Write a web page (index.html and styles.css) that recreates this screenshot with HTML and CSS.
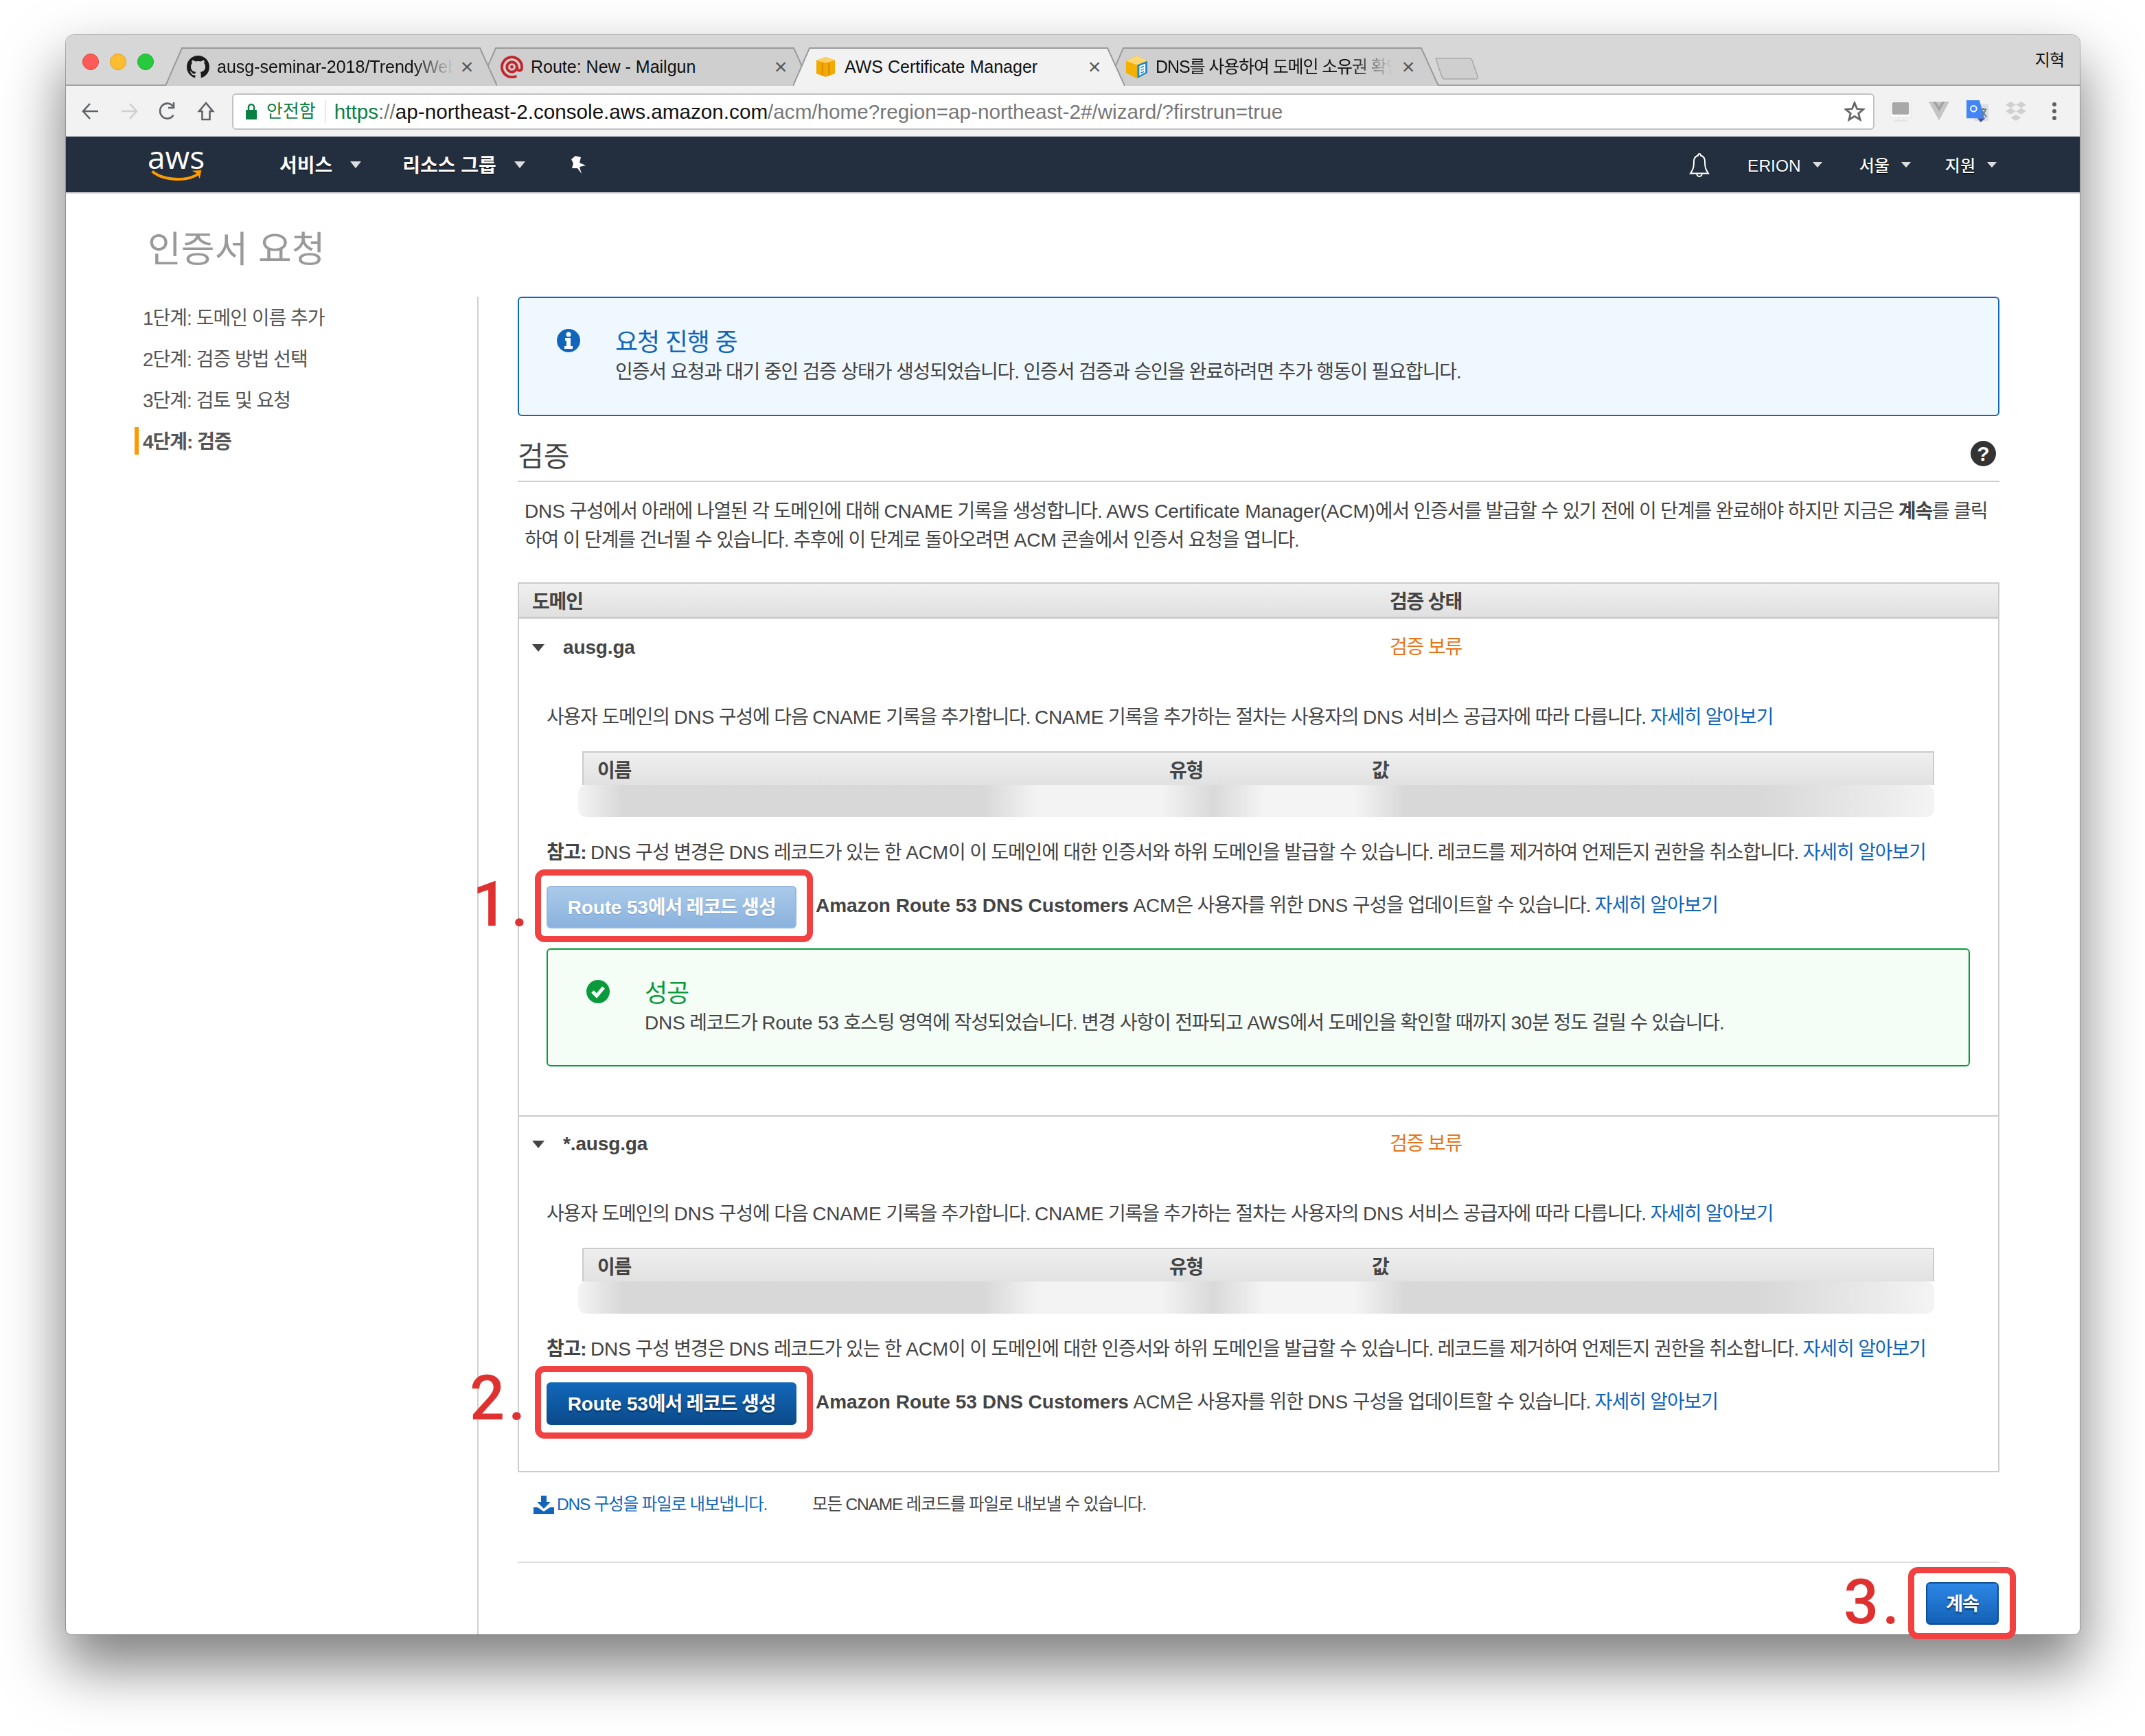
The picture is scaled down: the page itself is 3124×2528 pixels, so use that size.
FILE: index.html
```html
<!DOCTYPE html>
<html lang="ko">
<head>
<meta charset="utf-8">
<title>AWS Certificate Manager</title>
<link rel="stylesheet" href="styles.css">
</head>
<body>
<div class="window">
  <header class="tabstrip">
    <div class="lights"><i class="light red"></i><i class="light yellow"></i><i class="light green"></i></div>
    <div class="tabs">
      <div class="tab t1">
        <svg class="tabshape" viewBox="0 0 483 56"><path d="M0 56 L24 1 H458 L483 56" /></svg>
        <svg class="fav" viewBox="0 0 16 16"><path fill="#1b1b1b" d="M8 0C3.58 0 0 3.58 0 8c0 3.54 2.29 6.53 5.47 7.59.4.07.55-.17.55-.38 0-.19-.01-.82-.01-1.49-2.01.37-2.53-.49-2.69-.94-.09-.23-.48-.94-.82-1.13-.28-.15-.68-.52-.01-.53.63-.01 1.08.58 1.23.82.72 1.21 1.87.87 2.33.66.07-.52.28-.87.51-1.07-1.78-.2-3.64-.89-3.64-3.95 0-.87.31-1.59.82-2.15-.08-.2-.36-1.02.08-2.12 0 0 .67-.21 2.2.82.64-.18 1.32-.27 2-.27.68 0 1.36.09 2 .27 1.53-1.04 2.2-.82 2.2-.82.44 1.1.16 1.92.08 2.12.51.56.82 1.27.82 2.15 0 3.07-1.87 3.75-3.65 3.95.29.25.54.73.54 1.48 0 1.07-.01 1.93-.01 2.2 0 .21.15.46.55.38A8.013 8.013 0 0016 8c0-4.42-3.58-8-8-8z"/></svg>
        <span class="tabtitle fade">ausg-seminar-2018/TrendyWeb</span>
        <span class="tabx">×</span>
      </div>
      <div class="tab t2">
        <svg class="tabshape" viewBox="0 0 483 56"><path d="M0 56 L24 1 H458 L483 56" /></svg>
        <svg class="fav" viewBox="0 0 34 34"><g fill="none" stroke="#c5242b"><path stroke-width="4" d="M24 30.5A15 15 0 1 1 32 17c0 4-1.500 5.500-3.500 5.500S25 21 25 17"/><circle cx="17" cy="17" r="7.500" stroke-width="4"/></g><circle cx="17" cy="17" r="2.500" fill="#c5242b"/></svg>
        <span class="tabtitle">Route: New - Mailgun</span>
        <span class="tabx">×</span>
      </div>
      <div class="tab t3 active">
        <svg class="tabshape" viewBox="0 0 483 56"><path d="M0 56 L24 1 H458 L483 56" /></svg>
        <svg class="fav" viewBox="0 0 34 34"><path fill="#f2a900" d="M3 7 L17 2 L31 7 V27 L17 32 L3 27Z"/><path fill="#ffcf66" d="M3 7 L17 2 L31 7 L17 11Z"/><path fill="#d68a00" d="M11 11h2v19h-2zM21 11h2v19h-2z"/></svg>
        <span class="tabtitle">AWS Certificate Manager</span>
        <span class="tabx">×</span>
      </div>
      <div class="tab t4">
        <svg class="tabshape" viewBox="0 0 483 56"><path d="M0 56 L24 1 H458 L483 56" /></svg>
        <svg class="fav" viewBox="0 0 34 34"><path fill="#f4b000" d="M1 8 L17 0 L33 8 V26 L17 34 L1 26Z"/><path fill="#ffd873" d="M1 8 L17 0 L33 8 L17 14Z"/><path fill="#1e88c9" d="M18 14 L33 8 V26 L18 34Z"/><path fill="#fff" d="M21 15.500 L30 12 V25 L21 30Z"/><path stroke="#1e88c9" stroke-width="1.500" d="M23 18 l5-2 M23 22 l5-2 M23 26 l5-2"/></svg>
        <span class="tabtitle fade hangul">DNS를 사용하여 도메인 소유권 확인</span>
        <span class="tabx">×</span>
      </div>
      <svg class="newtab" viewBox="0 0 64 32"><path d="M1 1 H50 Q53 1 54 4 L62 27 Q63 31 60 31 H14 Q11 31 10 28Z"/></svg>
    </div>
    <span class="username">지혁</span>
  </header>

  <div class="toolbar">
    <div class="navcell"><svg class="tool" viewBox="0 0 28 28"><path d="M25 14H4M13 3 3 14l10 11" stroke="#5f6368"/></svg></div>
    <div class="navcell"><svg class="tool" viewBox="0 0 28 28"><path d="M3 14h21M15 3l10 11-10 11" stroke="#cfcfcf"/></svg></div>
    <div class="navcell"><svg class="tool" viewBox="0 0 28 28"><path d="M22.500 19.500A10.500 11 0 1 1 22 7M23 1v8h-8" stroke="#5f6368"/></svg></div>
    <div class="navcell"><svg class="tool" viewBox="0 0 28 28"><path d="M14 2 4 14h4.500v12h11V14H24Z" stroke="#5f6368"/></svg></div>
    <div class="omnibox">
      <svg class="lock" viewBox="0 0 16 24"><path fill="#0b8043" d="M1 10h14a1 1 0 0 1 1 1v12a1 1 0 0 1-1 1H1a1 1 0 0 1-1-1V11a1 1 0 0 1 1-1z"/><path fill="none" stroke="#0b8043" stroke-width="2.500" d="M4 10V6a4 4 0 0 1 8 0v4"/></svg>
      <span class="secure">안전함</span>
      <span class="omnisep"></span>
      <span class="url"><span class="green">https</span><span class="gray">://</span>ap-northeast-2.console.aws.amazon.com<span class="gray">/acm/home?region=ap-northeast-2#/wizard/?firstrun=true</span></span>
      <svg class="star" viewBox="0 0 32 32"><path fill="none" stroke="#666" stroke-width="3" d="M16 3l3.800 9.300 10 .7-7.700 6.400 2.500 9.700L16 23.800l-8.600 5.300 2.500-9.700L2.200 13l10-.7z"/></svg>
    </div>
    <div class="exts">
      <div class="extcell"><svg class="ext" viewBox="0 0 34 34"><rect x="1" y="0" width="32" height="27" rx="3" fill="#fafafa" stroke="#e4e4e4"/><rect x="4" y="3" width="26" height="19" rx="2" fill="#a8a8a8"/><path fill="#f6f6f6" stroke="#ddd" d="M13 27h8v4h-8zM7 31h20v2.500H7z"/></svg></div>
      <div class="extcell"><svg class="ext" viewBox="0 0 34 30"><path fill="#c4c4c4" d="M1 0h32L17 29Z"/><path fill="#a0a0a0" d="M8 0h18l-9 15Z"/><path fill="#c4c4c4" d="M12 0h10l-5 8Z"/></svg></div>
      <div class="extcell"><svg class="ext" viewBox="0 0 34 34"><rect x="12" y="6" width="22" height="26" fill="#dedede"/><path fill="#4285f4" d="M0 0h20l8 28H0Z"/><path fill="#3f51b5" d="M17 28h12l-7 6Z"/><circle cx="11" cy="13" r="4.500" fill="none" stroke="#fff" stroke-width="2"/><path stroke="#607d8b" stroke-width="2" fill="none" d="M22 14h9M26 12v3M30 15l-7 11M24 16l7 10"/></svg></div>
      <div class="extcell"><svg class="ext" viewBox="0 0 34 30"><path fill="#d0d0d0" d="M9 0l8 5-8 5-8-5zM25 0l8 5-8 5-8-5zM9 10l8 5-8 5-8-5zM25 10l8 5-8 5-8-5zM17 20l8 5-8 5-8-5z"/></svg></div>
      <div class="extcell"><svg class="ext dots" viewBox="0 0 6 26"><circle cx="3" cy="3" r="3"/><circle cx="3" cy="13" r="3"/><circle cx="3" cy="23" r="3"/></svg></div>
    </div>
  </div>

  <nav class="awsnav">
    <div class="awslogo">
      <span class="awsword">aws</span>
      <svg class="smile" viewBox="0 0 84 22"><path fill="none" stroke="#f90" stroke-width="4.500" d="M2 5C20 20 58 22 76 9"/><path fill="#f90" d="M66 4l15-1-3 14-3-8z"/></svg>
    </div>
    <span class="navitem services">서비스</span><i class="caret big"></i>
    <span class="navitem groups">리소스 그룹</span><i class="caret big"></i>
    <svg class="pin" viewBox="0 0 26 26"><path fill="#fff" d="M9 0 17 2 15 10 24 14 15 16 18 26 12 18 4 18 6 11 3 5Z"/></svg>
    <svg class="bell" viewBox="0 0 32 36"><path fill="none" stroke="#fff" stroke-width="2" d="M16 2c1 0 2 1 2 2.500 4 1 6 5 6 9 0 8 1 11 5 17H3c4-6 5-9 5-17 0-4 2-8 6-9C14 3 15 2 16 2zM12 30c0 3 2 5 4 5s4-2 4-5"/></svg>
    <span class="navitem small erion">ERION</span><i class="caret"></i>
    <span class="navitem small seoul">서울</span><i class="caret"></i>
    <span class="navitem small support">지원</span><i class="caret"></i>
  </nav>

  <div class="page">
    <h1 class="pagetitle">인증서 요청</h1>
    <div class="columns">
      <aside class="sidenav">
        <ul class="steps">
          <li class="step">1단계: 도메인 이름 추가</li>
          <li class="step">2단계: 검증 방법 선택</li>
          <li class="step">3단계: 검토 및 요청</li>
          <li class="step current">4단계: 검증</li>
        </ul>
      </aside>
      <main class="main">
        <section class="alert info">
          <svg class="alerticon" viewBox="0 0 34 34"><circle cx="17" cy="17" r="17" fill="#1166bb"/><circle cx="17" cy="8" r="3.500" fill="#fff"/><path fill="#fff" d="M12 13h8v12h3v4H11v-4h3v-8h-2z"/></svg>
          <div class="alertbody">
            <h2 class="alerttitle">요청 진행 중</h2>
            <p class="alerttext">인증서 요청과 대기 중인 검증 상태가 생성되었습니다. 인증서 검증과 승인을 완료하려면 추가 행동이 필요합니다.</p>
          </div>
        </section>

        <div class="sectionhead">
          <h2 class="sectiontitle">검증</h2>
          <span class="help">?</span>
        </div>
        <p class="intro"><span class="en">DNS</span> 구성에서 아래에 나열된 각 도메인에 대해 <span class="en">CNAME</span> 기록을 생성합니다. <span class="en">AWS Certificate Manager(ACM)</span>에서 인증서를 발급할 수 있기 전에 이 단계를 완료해야 하지만 지금은 <b>계속</b>를 클릭하여 이 단계를 건너뛸 수 있습니다. 추후에 이 단계로 돌아오려면 <span class="en">ACM</span> 콘솔에서 인증서 요청을 엽니다.</p>

        <div class="domains">
          <div class="domainshead"><span class="domcol">도메인</span><span>검증 상태</span></div>

          <div class="domain first">
            <div class="domainrow"><span class="domcol domname"><i class="tri"></i><span class="en">ausg.ga</span></span><span class="pending">검증 보류</span></div>
            <p class="line">사용자 도메인의 <span class="en">DNS</span> 구성에 다음 <span class="en">CNAME</span> 기록을 추가합니다. <span class="en">CNAME</span> 기록을 추가하는 절차는 사용자의 <span class="en">DNS</span> 서비스 공급자에 따라 다릅니다. <a class="link">자세히 알아보기</a></p>
            <div class="records">
              <div class="recordshead"><span class="c1">이름</span><span class="c2">유형</span><span>값</span></div>
              <div class="band"></div>
            </div>
            <p class="line note"><b>참고:</b> <span class="en">DNS</span> 구성 변경은 <span class="en">DNS</span> 레코드가 있는 한 <span class="en">ACM</span>이 이 도메인에 대한 인증서와 하위 도메인을 발급할 수 있습니다. 레코드를 제거하여 언제든지 권한을 취소합니다. <a class="link">자세히 알아보기</a></p>
            <div class="action">
              <span class="redbox"></span><span class="marker m1">1.</span>
              <button class="btn disabled"><span class="en">Route 53</span>에서 레코드 생성</button>
              <span class="actiontext"><b class="en">Amazon Route 53 DNS Customers</b> <span class="en">ACM</span>은 사용자를 위한 <span class="en">DNS</span> 구성을 업데이트할 수 있습니다. <a class="link">자세히 알아보기</a></span>
            </div>
            <section class="alert success">
              <svg class="alerticon" viewBox="0 0 34 34"><circle cx="17" cy="17" r="17" fill="#0a9a3c"/><path fill="none" stroke="#fff" stroke-width="5" d="M9 17l6 6 10-12"/></svg>
              <div class="alertbody">
                <h2 class="alerttitle">성공</h2>
                <p class="alerttext"><span class="en">DNS</span> 레코드가 <span class="en">Route 53</span> 호스팅 영역에 작성되었습니다. 변경 사항이 전파되고 <span class="en">AWS</span>에서 도메인을 확인할 때까지 <span class="en">30</span>분 정도 걸릴 수 있습니다.</p>
              </div>
            </section>
          </div>

          <div class="domain second">
            <div class="domainrow"><span class="domcol domname"><i class="tri"></i><span class="en">*.ausg.ga</span></span><span class="pending">검증 보류</span></div>
            <p class="line">사용자 도메인의 <span class="en">DNS</span> 구성에 다음 <span class="en">CNAME</span> 기록을 추가합니다. <span class="en">CNAME</span> 기록을 추가하는 절차는 사용자의 <span class="en">DNS</span> 서비스 공급자에 따라 다릅니다. <a class="link">자세히 알아보기</a></p>
            <div class="records">
              <div class="recordshead"><span class="c1">이름</span><span class="c2">유형</span><span>값</span></div>
              <div class="band"></div>
            </div>
            <p class="line note"><b>참고:</b> <span class="en">DNS</span> 구성 변경은 <span class="en">DNS</span> 레코드가 있는 한 <span class="en">ACM</span>이 이 도메인에 대한 인증서와 하위 도메인을 발급할 수 있습니다. 레코드를 제거하여 언제든지 권한을 취소합니다. <a class="link">자세히 알아보기</a></p>
            <div class="action">
              <span class="redbox"></span><span class="marker m2">2.</span>
              <button class="btn primary"><span class="en">Route 53</span>에서 레코드 생성</button>
              <span class="actiontext"><b class="en">Amazon Route 53 DNS Customers</b> <span class="en">ACM</span>은 사용자를 위한 <span class="en">DNS</span> 구성을 업데이트할 수 있습니다. <a class="link">자세히 알아보기</a></span>
            </div>
          </div>
        </div>

        <div class="export">
          <svg class="dl" viewBox="0 0 30 27"><path fill="#1166bb" d="M11 0h8v9h6L15 19 5 9h6z"/><path fill="#1166bb" d="M0 17h6l9 6 9-6h6v10H0z"/></svg>
          <a class="link exportlink">DNS 구성을 파일로 내보냅니다.</a>
          <span class="exporttext">모든 CNAME 레코드를 파일로 내보낼 수 있습니다.</span>
        </div>

        <div class="footer">
          <div class="continuewrap">
            <span class="redbox"></span><span class="marker m3">3.</span>
            <button class="btn continue">계속</button>
          </div>
        </div>
      </main>
    </div>
  </div>
</div>
</body>
</html>
```

FILE: styles.css
```css
* { box-sizing: border-box; }
html, body { margin: 0; padding: 0; background: #fff; }
body {
  width: 3124px;
  height: 2528px;
  overflow: hidden;
  padding: 51px 0 0 96px;
  font-family: "Liberation Sans", "Noto Sans CJK KR", sans-serif;
  font-size: 28px;
  line-height: 42px;
  letter-spacing: -1.15px;
  color: #444;
}
h1, h2, p, ul { margin: 0; padding: 0; font-weight: normal; }
b { font-weight: 700; }
.link { color: #1166bb; }
.en { letter-spacing: -0.15px; }
b.en { letter-spacing: 0; }

.window {
  width: 2933px;
  height: 2329px;
  border-radius: 12px 12px 8px 8px;
  background: #fff;
  box-shadow: 0 0 0 1px rgba(90, 90, 90, .45), 0 44px 84px 4px rgba(0, 0, 0, .5);
}

/* browser chrome */
.tabstrip {
  height: 74px;
  display: flex;
  align-items: flex-end;
  background: #d7d7d7;
  border-radius: 12px 12px 0 0;
  border-bottom: 2px solid #a2a2a2;
  letter-spacing: 0;
}
.lights {
  width: 145px;
  height: 72px;
  flex: none;
  display: flex;
  gap: 16px;
  padding: 27px 0 0 24px;
}
.light { width: 24px; height: 24px; border-radius: 50%; }
.light.red { background: #fc5b57; border: 1px solid #e0443e; }
.light.yellow { background: #fdbd2e; border: 1px solid #dea123; }
.light.green { background: #27c93f; border: 1px solid #1dad2b; }

.tabs { display: flex; align-items: flex-end; flex: none; margin-bottom: -2px; }
.tab {
  position: relative;
  width: 483px;
  height: 56px;
  flex: none;
  margin-right: -26px;
  display: flex;
  align-items: center;
  padding: 0 0 0 31px;
  font-size: 25px;
  color: #111;
}
.tabshape { position: absolute; inset: 0; width: 483px; height: 56px; }
.tabshape path { fill: #cfcfcf; stroke: #9a9a9a; stroke-width: 2; }
.t1 { z-index: 4; }
.t2 { z-index: 3; }
.t3 { z-index: 5; }
.t4 { z-index: 2; }
.active .tabshape path { fill: #f2f2f2; }
.fav { position: relative; width: 33px; height: 33px; flex: none; margin-right: 11px; }
.t4 .fav { margin-left: -4px; }
.tabtitle { position: relative; width: 354px; flex: none; white-space: nowrap; overflow: hidden; line-height: 32px; }
.t4 .tabtitle { width: 358px; }
.hangul { letter-spacing: -1.1px; }
.fade { -webkit-mask-image: linear-gradient(to right, #000 285px, transparent 345px); mask-image: linear-gradient(to right, #000 285px, transparent 345px); }
.tabx { position: relative; width: 24px; text-align: center; color: #555; font-size: 32px; line-height: 32px; margin-left: -2px; }
.newtab { width: 64px; height: 32px; flex: none; margin: 0 0 9px 21px; position: relative; z-index: 1; }
.newtab path { fill: #cfcfcf; stroke: #a8a8a8; stroke-width: 1.5; }
.username { margin-left: auto; align-self: center; padding: 2px 23px 0 0; font-size: 24px; line-height: 32px; color: #111; letter-spacing: -1px; }

.toolbar {
  height: 74px;
  display: flex;
  align-items: center;
  padding: 1px 9px 0 8px;
  background: #f2f2f2;
  border-bottom: 1px solid #c9c9c9;
  letter-spacing: 0;
}
.navcell { width: 56px; display: flex; justify-content: center; flex: none; }
.tool { width: 28px; height: 28px; }
.tool path { fill: none; stroke-width: 2.6; }
.omnibox {
  flex: 1;
  height: 53px;
  margin-left: 10px;
  display: flex;
  align-items: center;
  padding: 0 12px 0 18px;
  background: #fff;
  border: 2px solid #c2c2c2;
  border-radius: 6px;
  font-size: 29.67px;
  color: #111;
}
.lock { width: 16px; height: 24px; flex: none; }
.secure { margin-left: 14px; color: #0b8043; font-size: 26px; }
.omnisep { width: 1px; height: 34px; background: #ccc; margin: 0 13px; }
.url { flex: 1; white-space: nowrap; padding-top: 1px; }
.green { color: #0b8043; }
.gray { color: #777; }
.star { width: 30px; height: 30px; flex: none; }
.exts { display: flex; margin-left: 10px; flex: none; }
.extcell { width: 56px; height: 34px; display: flex; justify-content: center; align-items: center; }
.ext { width: 32px; height: 32px; }
.dots { width: 6px; height: 28px; fill: #5f5f5f; }

/* AWS nav */
.awsnav {
  height: 83px;
  display: flex;
  align-items: center;
  background: #232f3e;
  border-bottom: 2px solid #d8d8d8;
  color: #fff;
  text-shadow: 0 1px 1px #000;
  letter-spacing: 0;
}
.awslogo { position: relative; width: 84px; height: 50px; margin-left: 120px; flex: none; }
.awsword { position: absolute; left: -1px; top: -12px; font-family: "Open Sans", sans-serif; font-size: 46px; line-height: 50px; text-shadow: none; }
.smile { position: absolute; left: 0; top: 30px; width: 84px; height: 20px; }
.navitem { font-size: 28px; font-weight: 700; line-height: 40px; white-space: nowrap; padding-top: 5px; }
.navitem.small { font-size: 24px; font-weight: 500; }
.navitem.erion { font-size: 24.5px; }
.services { margin-left: 107px; }
.groups { margin-left: 60px; }
.caret { width: 0; height: 0; margin-left: 17px; flex: none; border-left: 7px solid transparent; border-right: 7px solid transparent; border-top: 8px solid #ddd; }
.caret.big { margin-left: 26px; border-left-width: 8px; border-right-width: 8px; border-top-width: 10px; }
.pin { width: 26px; height: 26px; margin-left: 64px; flex: none; }
.bell { width: 32px; height: 36px; margin-left: auto; flex: none; }
.erion { margin-left: 54px; }
.seoul { margin-left: 54px; }
.support { margin-left: 50px; }
.awsnav > i:last-child { margin-right: 121px; }

/* page */
.pagetitle {
  height: 150px;
  padding: 54px 0 0 119px;
  font-size: 53px;
  line-height: 56px;
  color: #999;
  letter-spacing: 0;
}
.columns { display: flex; }
.sidenav { width: 601px; height: 1948px; flex: none; border-right: 2px solid #d0d0d0; }
.steps { list-style: none; margin: 10px 0 0 100px; }
.step { height: 40px; margin-bottom: 20px; border-left: 6px solid transparent; padding: 2px 0 0 6px; line-height: 40px; font-size: 28px; letter-spacing: -1px; color: #555; }
.step.current { border-left-color: #f90; font-weight: 700; }
.main { width: 2158px; margin-left: 57px; flex: none; }

.alert { display: flex; border: 2px solid; border-radius: 6px; }
.alert.info { height: 174px; border-color: #1166bb; background: #f0f8ff; padding: 43px 0 0 55px; }
.alert.success { height: 172px; margin-top: 29px; border-color: #0a9a3c; background: #f5fdf7; padding: 42px 0 0 56px; }
.alerticon { width: 34px; height: 34px; flex: none; margin: 2px 0 0; }
.alert.info .alerticon { margin-right: 51px; }
.alert.success .alerticon { margin-right: 51px; }
.alerttitle { font-size: 36px; line-height: 44px; }
.info .alerttitle { color: #1166bb; }
.success .alerttitle { color: #0a9a3c; }

.sectionhead {
  height: 96px;
  display: flex;
  justify-content: space-between;
  padding: 33px 5px 0 0;
  border-bottom: 2px solid #ccc;
}
.sectiontitle { font-size: 41px; line-height: 52px; letter-spacing: 0; }
.help {
  width: 37px;
  height: 37px;
  margin-top: 3px;
  border-radius: 50%;
  background: #333;
  color: #fff;
  font-size: 30px;
  font-weight: 700;
  line-height: 37px;
  text-align: center;
  letter-spacing: 0;
}
.intro { margin-top: 22px; padding-left: 10px; margin-bottom: -2px; }

.domains { margin-top: 42px; border: 2px solid #ccc; }
.domainshead {
  height: 51px;
  display: flex;
  align-items: center;
  padding: 6px 0 0 19px;
  background: linear-gradient(#f0f0f0, #e0e0e0);
  border-bottom: 3px solid #ccc;
  font-weight: 700;
}
.domcol { width: 1249px; flex: none; }
.domain { padding: 0 41px 67px 40px; }
.domain.first { padding-bottom: 71px; border-bottom: 2px solid #ccc; }
.domainrow { height: 80px; display: flex; align-items: center; margin: 0 -41px 0 -40px; padding: 4px 0 0 19px; }
.second .domainrow { height: 78px; padding-top: 2px; }
.domname { display: flex; align-items: center; font-weight: 700; }
.tri { width: 0; height: 0; margin-right: 27px; border-left: 9px solid transparent; border-right: 9px solid transparent; border-top: 11px solid #444; }
.pending { color: #e8741a; }
.line { white-space: nowrap; }
.domainrow + .line { padding-top: 43px; }
.note { margin-top: 31px; margin-bottom: -2px; }
.records { margin: 28px 52px 0; }
.recordshead {
  height: 49px;
  display: flex;
  align-items: center;
  padding: 7px 0 0 20px;
  background: linear-gradient(#efefef, #e1e1e1);
  border: 2px solid #ccc;
  border-bottom: 0;
  font-weight: 700;
}
.c1 { width: 833px; flex: none; }
.c2 { width: 295px; flex: none; }
.band {
  height: 47px;
  margin: 0 0 0 -6px;
  border-radius: 12px;
  background: linear-gradient(to right, #f4f4f4 0, #d8d8d8 64px, #d8d8d8 590px, #f3f3f3 668px, #f3f3f3 850px, #d9d9d9 925px, #f4f4f4 1000px, #f4f4f4 1130px, #d8d8d8 1205px, #d8d8d8 1720px, #ececec 1910px, #f4f4f4 1975px);
}

.action { position: relative; display: flex; align-items: center; margin-top: 29px; height: 62px; }
.btn {
  height: 62px;
  border: 0;
  border-radius: 6px;
  font: 700 28px/40px "Liberation Sans", "Noto Sans CJK KR", sans-serif;
  letter-spacing: -1.15px;
  color: #fff;
  text-align: center;
  padding: 2px 0 0;
}
.action .btn { width: 364px; flex: none; }
.btn.disabled { background: linear-gradient(#abcae9, #8ab2de); border: 2px solid #95b8e0; text-shadow: 0 1px 1px rgba(60, 100, 150, .4); }
.btn.primary { background: linear-gradient(#1268ba, #0b4a8a); text-shadow: 0 2px 2px #02305f; }
.actiontext { margin: -4px 0 0 28px; white-space: nowrap; }
.redbox {
  position: absolute;
  left: -17px;
  top: -24px;
  width: 405px;
  height: 106px;
  border: 9px solid #f14141;
  border-radius: 14px;
  z-index: 2;
}
.marker {
  position: absolute;
  font-family: "Roboto", sans-serif;
  font-weight: 500;
  font-size: 90px;
  line-height: 90px;
  letter-spacing: 5px;
  color: #e03131;
  z-index: 2;
  white-space: nowrap;
}
.m1 { left: -108px; top: -17px; }
.m2 { left: -112px; top: -21px; }
.m3 { left: -120px; top: -15px; }

.export { height: 40px; margin-top: 27px; display: flex; align-items: center; padding-left: 23px; font-size: 24.5px; }
.dl { width: 30px; height: 27px; flex: none; margin-right: 4px; }
.exportlink { width: 372px; flex: none; }
.footer { margin-top: 63px; border-top: 2px solid #ddd; padding-top: 28px; display: flex; justify-content: flex-end; }
.continuewrap { position: relative; width: 106px; height: 62px; margin-right: 1px; }
.continuewrap .redbox { left: -26px; top: -22px; width: 157px; height: 105px; }
.btn.continue { width: 106px; background: linear-gradient(#2d87e6, #1261b5); border: 2px solid #0b4d96; text-shadow: 0 2px 2px #02305f; font-size: 27px; }
```
